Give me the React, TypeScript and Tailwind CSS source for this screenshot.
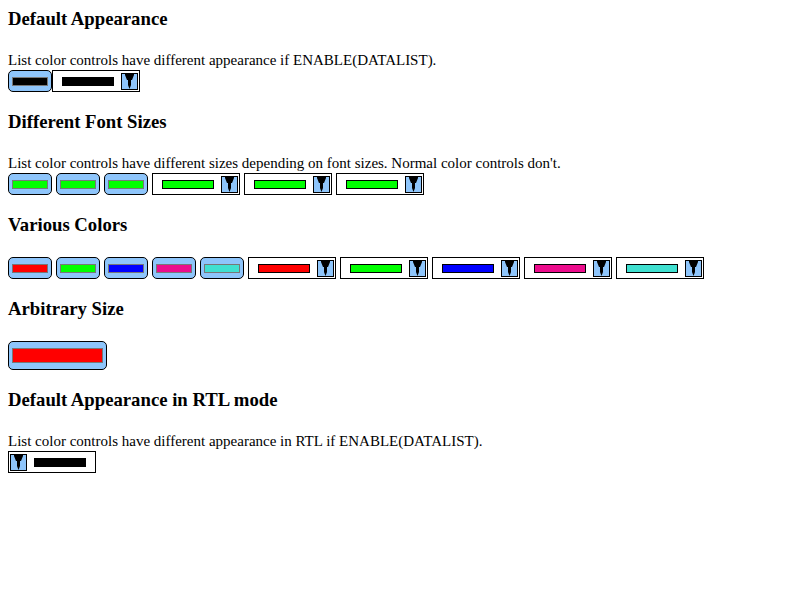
import React from "react";

const BLUE = "#8ec5fb";

function Swatch({ color, big = false }: { color: string; big?: boolean }) {
  if (big) {
    return (
      <div
        className="box-border w-[99px] h-[29px] border border-black rounded-[5px] flex items-center justify-center shrink-0"
        style={{ background: BLUE }}
      >
        <div className="box-border w-[91px] h-[15px] border border-[#777777]" style={{ background: color }} />
      </div>
    );
  }
  return (
    <div
      className="box-border w-[44px] h-[22px] border border-black rounded-[5px] flex items-center justify-center shrink-0"
      style={{ background: BLUE }}
    >
      <div className="box-border w-[36px] h-[9px] border border-[#777777]" style={{ background: color }} />
    </div>
  );
}

function Arrow() {
  return (
    <svg width="15" height="15" viewBox="0 0 15 15" className="block">
      <polygon points="3,0 12,0 12,1 10,6 9,6 9,11 7.5,15 6,11 6,6 5,6 3,1" fill="#000" />
    </svg>
  );
}

function ListBox({ color, rtl = false }: { color: string; rtl?: boolean }) {
  const btn = (
    <div
      className="box-border w-[17px] h-[17px] border border-black flex items-center justify-center shrink-0"
      style={{ background: BLUE }}
    >
      <Arrow />
    </div>
  );
  const bar = (
    <div className="box-border w-[52px] h-[9px] border border-black shrink-0" style={{ background: color }} />
  );
  if (rtl) {
    return (
      <div className="box-border w-[88px] h-[22px] border border-black bg-white flex items-center pl-[1px] shrink-0">
        {btn}
        <div className="ml-[7px]">{bar}</div>
      </div>
    );
  }
  return (
    <div className="box-border w-[88px] h-[22px] border border-black bg-white flex items-center pl-[9px] pr-[1px] shrink-0">
      {bar}
      <div className="ml-auto">{btn}</div>
    </div>
  );
}

function H({ children, first = false }: { children: React.ReactNode; first?: boolean }) {
  return (
    <h3
      className={
        "text-[18.72px] font-bold leading-[22px] mb-[21px] " + (first ? "mt-0" : "mt-[19px]")
      }
    >
      {children}
    </h3>
  );
}

function T({ children }: { children: React.ReactNode }) {
  return <div className="text-[15px] leading-[19px]">{children}</div>;
}

export default function App() {
  const colors = ["#ff0000", "#00ff00", "#0000ff", "#ec0c8c", "#40e0d0"];
  return (
    <div
      className="bg-white text-black w-[800px] h-[600px] p-[8px] box-border overflow-hidden"
      style={{ fontFamily: '"Liberation Serif", "Times New Roman", serif' }}
    >
      <H first>Default Appearance</H>
      <T>List color controls have different appearance if ENABLE(DATALIST).</T>
      <div className="flex">
        <Swatch color="#000000" />
        <ListBox color="#000000" />
      </div>

      <H>Different Font Sizes</H>
      <T>List color controls have different sizes depending on font sizes. Normal color controls don't.</T>
      <div className="flex gap-[4px]">
        <Swatch color="#00ff00" />
        <Swatch color="#00ff00" />
        <Swatch color="#00ff00" />
        <ListBox color="#00ff00" />
        <ListBox color="#00ff00" />
        <ListBox color="#00ff00" />
      </div>

      <H>Various Colors</H>
      <div className="flex gap-[4px]">
        {colors.map((c) => (
          <Swatch key={"s" + c} color={c} />
        ))}
        {colors.map((c) => (
          <ListBox key={"l" + c} color={c} />
        ))}
      </div>

      <H>Arbitrary Size</H>
      <div className="flex">
        <Swatch color="#ff0000" big />
      </div>

      <H>Default Appearance in RTL mode</H>
      <T>List color controls have different appearance in RTL if ENABLE(DATALIST).</T>
      <div className="flex">
        <ListBox color="#000000" rtl />
      </div>
    </div>
  );
}
